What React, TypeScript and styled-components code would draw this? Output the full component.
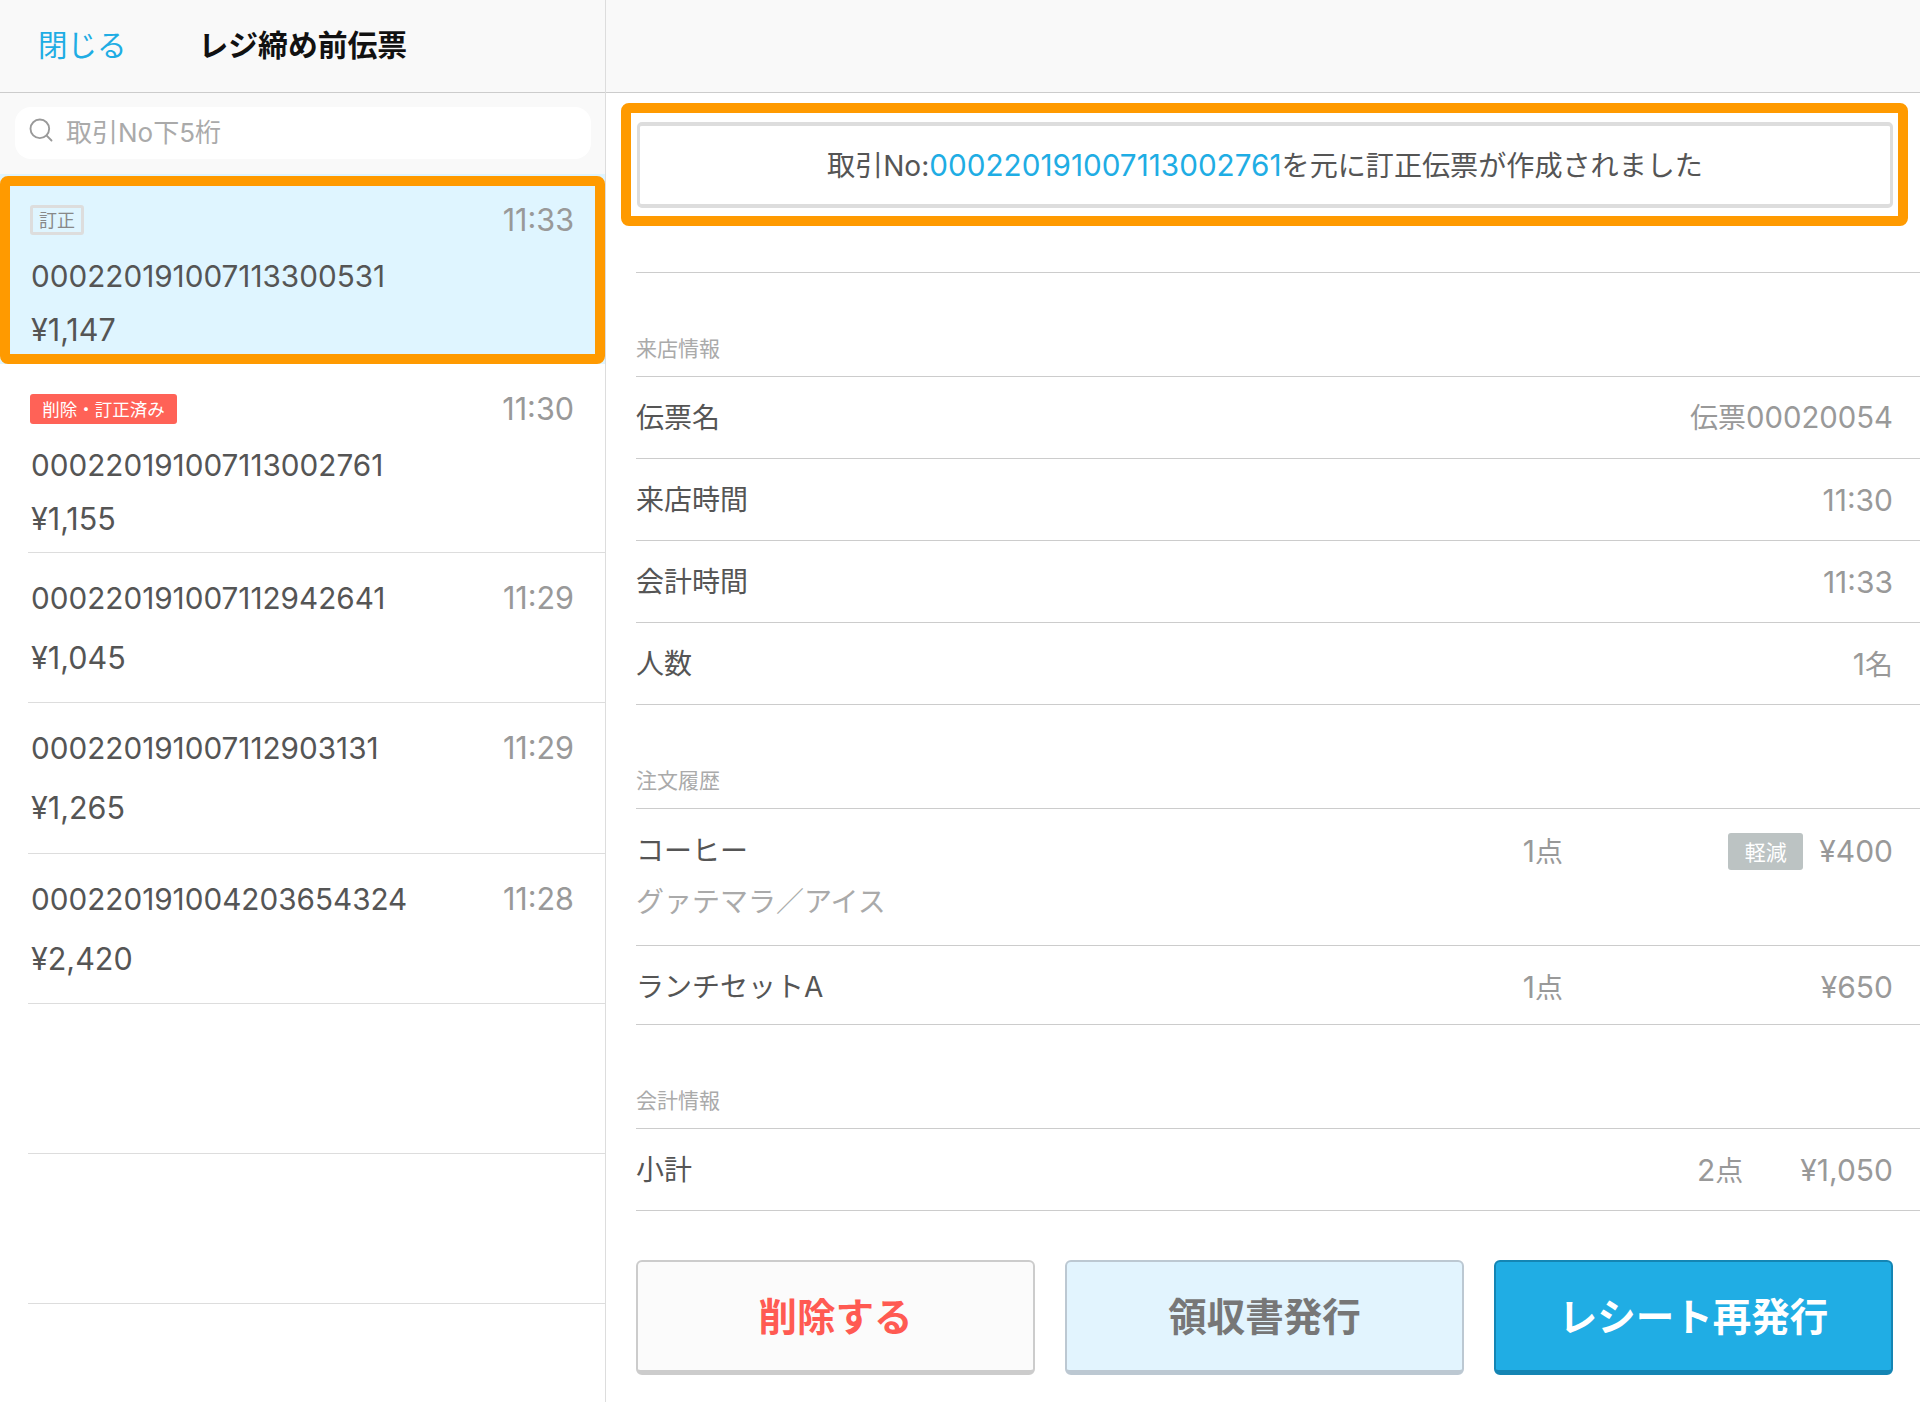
import styled, { createGlobalStyle } from 'styled-components';
import { Search } from 'lucide-react';

// data
const tickets = [
    { no: '000220191007113300531', price: '¥1,147', time: '11:33', tag: 'revised', selected: true },
    { no: '000220191007113002761', price: '¥1,155', time: '11:30', tag: 'deleted' },
    { no: '000220191007112942641', price: '¥1,045', time: '11:29' },
    { no: '000220191007112903131', price: '¥1,265', time: '11:29' },
    { no: '000220191004203654324', price: '¥2,420', time: '11:28' },
];

const App = () => {
    return (
        <>
            <GlobalStyle />
            <Page>
                <Sidebar>
                    <TopBar>
                        <CloseLink>閉じる</CloseLink>
                        <TopTitle>レジ締め前伝票</TopTitle>
                    </TopBar>
                    <SearchBand>
                        <SearchBox>
                            <Search size={28} strokeWidth={1.6} color="#999" />
                            <Placeholder>取引No下5桁</Placeholder>
                        </SearchBox>
                    </SearchBand>
                    {tickets.map((t) => {
                        const body = (
                            <>
                                <TicketHead>
                                    {t.tag === 'revised' && <RevisedTag>訂正</RevisedTag>}
                                    {t.tag === 'deleted' && <DeletedTag>削除・訂正済み</DeletedTag>}
                                    {!t.tag && <TicketNo>{t.no}</TicketNo>}
                                    <TicketTime>{t.time}</TicketTime>
                                </TicketHead>
                                {t.tag && <TaggedNo>{t.no}</TaggedNo>}
                                <TicketPrice $tagged={!!t.tag}>{t.price}</TicketPrice>
                            </>
                        );
                        return t.selected ? (
                            <SelectedWrap key={t.no}>
                                <SelectedTicket>{body}</SelectedTicket>
                            </SelectedWrap>
                        ) : (
                            <Ticket key={t.no} $tagged={!!t.tag}>
                                {body}
                            </Ticket>
                        );
                    })}
                    <Ticket />
                    <Ticket />
                </Sidebar>
                <Main>
                    <TopBar />
                    <NoticeFrame>
                        <Notice>
                            <NoticeText>
                                取引No:<NoticeLink>000220191007113002761</NoticeLink>を元に訂正伝票が作成されました
                            </NoticeText>
                        </Notice>
                    </NoticeFrame>
                    <Detail>
                        <Divider />
                        <SectionLabel>来店情報</SectionLabel>
                        <InfoRow>
                            <RowLabel>伝票名</RowLabel>
                            <RowValue>
                                伝票<SlipNum>00020054</SlipNum>
                            </RowValue>
                        </InfoRow>
                        <InfoRow>
                            <RowLabel>来店時間</RowLabel>
                            <RowValue>
                                <Num>11:30</Num>
                            </RowValue>
                        </InfoRow>
                        <InfoRow>
                            <RowLabel>会計時間</RowLabel>
                            <RowValue>
                                <Num>11:33</Num>
                            </RowValue>
                        </InfoRow>
                        <InfoRow>
                            <RowLabel>人数</RowLabel>
                            <RowValue>
                                <Num>1</Num>名
                            </RowValue>
                        </InfoRow>
                        <SectionLabel>注文履歴</SectionLabel>
                        <OrderRow $tall>
                            <div>
                                <RowLabel>コーヒー</RowLabel>
                                <OrderOption>グァテマラ／アイス</OrderOption>
                            </div>
                            <RowValue>
                                <Num>1</Num>点
                            </RowValue>
                            <OrderPrice>
                                <ReducedTag>軽減</ReducedTag>
                                <RowValue>
                                    <Num>¥400</Num>
                                </RowValue>
                            </OrderPrice>
                        </OrderRow>
                        <OrderRow>
                            <RowLabel>ランチセットA</RowLabel>
                            <RowValue>
                                <Num>1</Num>点
                            </RowValue>
                            <OrderPrice>
                                <RowValue>
                                    <Num>¥650</Num>
                                </RowValue>
                            </OrderPrice>
                        </OrderRow>
                        <SectionLabel>会計情報</SectionLabel>
                        <InfoRow>
                            <RowLabel>小計</RowLabel>
                            <SubtotalValues>
                                <RowValue>
                                    <Num>2</Num>点
                                </RowValue>
                                <RowValue>
                                    <Num>¥1,050</Num>
                                </RowValue>
                            </SubtotalValues>
                        </InfoRow>
                        <Buttons>
                            <ActionButton $variant="delete">削除する</ActionButton>
                            <ActionButton $variant="receipt">領収書発行</ActionButton>
                            <ActionButton $variant="primary">レシート再発行</ActionButton>
                        </Buttons>
                    </Detail>
                </Main>
            </Page>
        </>
    );
};

export default App;

const GlobalStyle = createGlobalStyle`
    * {
        box-sizing: border-box;
    }
    body {
        margin: 0;
        background: #fff;
        font-family: 'Inter', 'Noto Sans CJK JP', sans-serif;
        color: #555;
    }
`;

const Page = styled.div`
    display: flex;
    width: 1920px;
    height: 1402px;
    overflow: hidden;
`;

const Sidebar = styled.aside`
    width: 606px;
    flex: none;
    border-right: 1px solid #ddd;
`;

const Main = styled.main`
    flex: 1;
    min-width: 0;
`;

const TopBar = styled.header`
    display: flex;
    align-items: center;
    height: 93px;
    padding-bottom: 7px;
    background: #f9f9f9;
    border-bottom: 1px solid #ccc;
`;

const CloseLink = styled.span`
    margin-left: 38px;
    font-size: 29.5px;
    color: #1fade4;
`;

const TopTitle = styled.h1`
    margin: 0 0 0 72px;
    font-size: 29.8px;
    font-weight: 700;
    color: #111;
`;

const SearchBand = styled.div`
    height: 81px;
    padding: 14px 14px 0 15px;
    background: #f9f9f9;
`;

const SearchBox = styled.div`
    display: flex;
    align-items: center;
    gap: 11px;
    height: 52px;
    padding: 0 0 6px 12px;
    background: #fff;
    border-radius: 16px;
`;

const Placeholder = styled.span`
    font-size: 26px;
    color: #aaa;
`;

const SelectedWrap = styled.div`
    height: 190px;
    padding-top: 2px;
    background: #dff5ff;
`;

const SelectedTicket = styled.div`
    height: 188px;
    padding: 14px 21px 0;
    border: 10px solid #ff9a00;
    border-radius: 8px;
    background: #dff5ff;
`;

const Ticket = styled.div<{ $tagged?: boolean }>`
    height: ${(p) => (p.$tagged ? 189 : 150.25)}px;
    margin-left: 28px;
    padding: 25px 31px 0 3px;
    border-bottom: 1px solid #ddd;
`;

const TicketHead = styled.div`
    display: flex;
    align-items: center;
    justify-content: space-between;
    height: 40px;
`;

const TicketNo = styled.span`
    font-size: 29.7px;
    color: #555;
`;

const TaggedNo = styled(TicketNo)`
    display: block;
    margin-top: 16px;
    line-height: 40px;
`;

const TicketTime = styled.span`
    padding-bottom: 1px;
    font-size: 30.5px;
    color: #999;
`;

const TicketPrice = styled.div<{ $tagged: boolean }>`
    margin-top: ${(p) => (p.$tagged ? 14 : 20)}px;
    font-size: 30.5px;
    line-height: 40px;
    color: #555;
`;

const RevisedTag = styled.span`
    display: flex;
    align-items: center;
    justify-content: center;
    width: 54px;
    height: 30px;
    margin-left: -1px;
    padding-bottom: 2px;
    border: 3px solid #ddd;
    border-radius: 3px;
    font-size: 18px;
    color: #888;
`;

const DeletedTag = styled.span`
    display: flex;
    align-items: center;
    justify-content: center;
    width: 147px;
    height: 30px;
    margin-left: -1px;
    padding-bottom: 2px;
    border-radius: 3px;
    background: #ff6257;
    font-size: 17.5px;
    color: #fff;
`;

const NoticeFrame = styled.div`
    height: 123px;
    margin: 10px 12px 0 15px;
    padding: 9px 5px 8px 6px;
    border: 10px solid #ff9a00;
    border-radius: 8px;
`;

const Notice = styled.div`
    display: flex;
    align-items: center;
    justify-content: center;
    height: 100%;
    padding-bottom: 4px;
    border-style: solid;
    border-color: #ddd;
    border-width: 4px 3px;
    border-radius: 5px;
`;

const NoticeText = styled.span`
    font-size: 28.1px;
    color: #555;
`;

const NoticeLink = styled.span`
    font-size: 29.7px;
    color: #1fade4;
`;

const Num = styled.span`
    font-size: 30px;
`;

const SlipNum = styled(Num)`
    font-size: 29.3px;
`;

const Detail = styled.div`
    padding-left: 30px;
`;

const Divider = styled.hr`
    height: 1px;
    margin: 46px 0 0;
    border: 0;
    background: #ccc;
`;

const SectionLabel = styled.div`
    display: flex;
    align-items: flex-end;
    height: 104px;
    padding: 0 0 13px;
    border-bottom: 1px solid #ccc;
    font-size: 21px;
    line-height: 28px;
    color: #aaa;
`;

const InfoRow = styled.div`
    display: flex;
    align-items: center;
    justify-content: space-between;
    height: 82px;
    padding: 1px 27px 0 0;
    border-bottom: 1px solid #ccc;
`;

const OrderRow = styled.div<{ $tall?: boolean }>`
    display: grid;
    grid-template-columns: 1fr auto 330px;
    align-items: ${(p) => (p.$tall ? 'start' : 'center')};
    height: ${(p) => (p.$tall ? 137 : 79)}px;
    padding: ${(p) => (p.$tall ? '22px' : '4px')} 27px 0 0;
    border-bottom: 1px solid #ccc;
`;

const RowLabel = styled.div`
    font-size: 28px;
    line-height: 40px;
    color: #555;
`;

const RowValue = styled.div`
    font-size: 28px;
    line-height: 40px;
    color: #999;
`;

const OrderOption = styled.div`
    margin-top: 11px;
    font-size: 28px;
    line-height: 40px;
    color: #aaa;
`;

const OrderPrice = styled.div`
    display: flex;
    align-items: center;
    justify-content: flex-end;
    gap: 16px;
`;

const ReducedTag = styled.span`
    display: flex;
    align-items: center;
    justify-content: center;
    width: 75px;
    height: 37px;
    padding-bottom: 2px;
    border-radius: 3px;
    background: #bcc3c3;
    font-size: 21px;
    color: #fff;
`;

const SubtotalValues = styled.div`
    display: flex;
    gap: 57px;
`;

const Buttons = styled.div`
    display: grid;
    grid-template-columns: repeat(3, 1fr);
    gap: 30px;
    margin-top: 49px;
    padding: 0 27px 0 0;
`;

const buttonColors = {
    delete: { bg: '#fbfbfb', border: '#ccc', color: '#ff5a52' },
    receipt: { bg: '#e2f4fe', border: '#bcc8d2', color: '#777' },
    primary: { bg: '#20ade4', border: '#1485b4', color: '#fff' },
};

const ActionButton = styled.button<{ $variant: keyof typeof buttonColors }>`
    height: 115px;
    padding: 0 0 4px;
    border: 2px solid ${(p) => buttonColors[p.$variant].border};
    border-bottom-width: 5px;
    border-radius: 6px;
    background: ${(p) => buttonColors[p.$variant].bg};
    font-family: inherit;
    font-size: 38.5px;
    font-weight: 700;
    color: ${(p) => buttonColors[p.$variant].color};
`;
